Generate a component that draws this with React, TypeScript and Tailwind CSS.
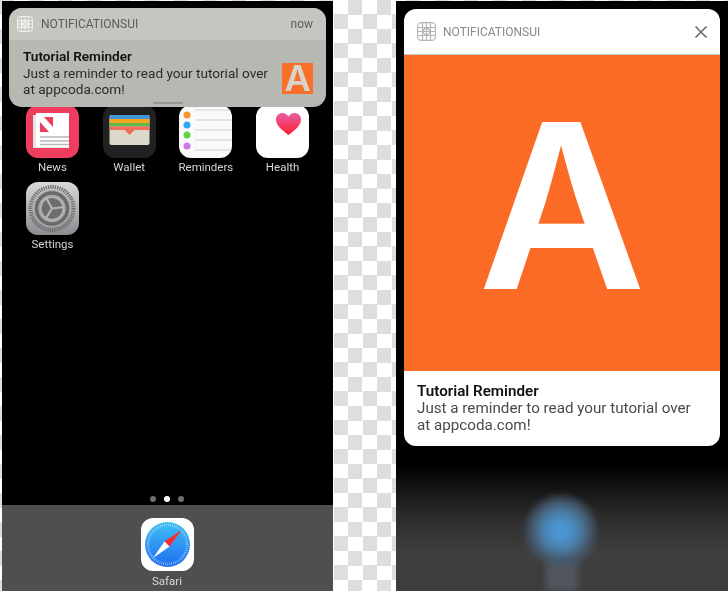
const NewsIcon = () => (
  <svg viewBox="0 0 53 53" className="h-full w-full">
    <rect width="53" height="53" fill="#ee3d5e" />
    <rect x="7" y="10" width="36" height="33" fill="#e4e4e4" />
    <rect x="10" y="8" width="33" height="34" fill="#fff" />
    <rect x="14" y="12" width="13" height="15" fill="#ee3d5e" />
    <path d="M14 12h4l9 10v5h-4l-9-10z" fill="#fff" />
    <path d="M14 32h29M14 36h29M14 39.500h29" stroke="#b8b8bc" strokeWidth="1.500" />
  </svg>
)

const WalletIcon = () => (
  <svg viewBox="0 0 53 53" className="h-full w-full">
    <rect width="53" height="53" fill="#212121" />
    <rect x="6.500" y="10" width="40" height="30" rx="2" fill="#dcd9cb" />
    <path d="M6.500 13a3 3 0 0 1 3-3h34a3 3 0 0 1 3 3v1h-40z" fill="#3f97d8" />
    <rect x="6.500" y="14" width="40" height="4" fill="#f4a81f" />
    <rect x="6.500" y="18" width="40" height="3.500" fill="#63b649" />
    <path d="M6.500 21.500h40v3.500h-15l-5 5-5-5h-15z" fill="#ee6f5c" />
  </svg>
)

const RemindersIcon = () => (
  <svg viewBox="0 0 53 53" className="h-full w-full">
    <rect width="53" height="53" fill="#fafafa" />
    <path d="M16 5h37M16 15h37M16 25h37M16 35h37M16 45h37" stroke="#c4c4c4" strokeWidth="0.800" />
    <circle cx="8" cy="10" r="3.500" fill="#f7932b" />
    <circle cx="8" cy="20" r="3.500" fill="#2fa9f5" />
    <circle cx="8" cy="30" r="3.500" fill="#62d444" />
    <circle cx="8" cy="41" r="3.500" fill="#ce79e6" />
  </svg>
)

const HealthIcon = () => (
  <svg viewBox="0 0 53 53" className="h-full w-full">
    <defs>
      <linearGradient id="heart" x1="0" y1="0" x2="0" y2="1">
        <stop offset="0" stopColor="#e75fa6" />
        <stop offset="1" stopColor="#ff1f2d" />
      </linearGradient>
    </defs>
    <rect width="53" height="53" fill="#fff" />
    <path d="M32.500 30C26 25 20 20.500 20 14.500 20 10.500 23 8 26.500 8c2.500 0 4.700 1.300 6 3.500C33.800 9.300 36 8 38.500 8 42 8 45 10.500 45 14.500c0 6-6 10.500-12.500 15.500z" fill="url(#heart)" />
  </svg>
)

const SettingsIcon = () => (
  <svg viewBox="0 0 53 53" className="h-full w-full">
    <defs>
      <linearGradient id="gear" x1="0" y1="0" x2="0" y2="1">
        <stop offset="0" stopColor="#d8d8d8" />
        <stop offset="1" stopColor="#8b8c90" />
      </linearGradient>
    </defs>
    <rect width="53" height="53" fill="url(#gear)" />
    <circle cx="26" cy="26.500" r="21.500" fill="none" stroke="#6d6d6d" strokeWidth="4" strokeDasharray="1.300 1.000" />
    <circle cx="26" cy="26.500" r="18.500" fill="#a9a9a9" />
    <circle cx="26" cy="26.500" r="15.500" fill="none" stroke="#6a6a6a" strokeWidth="3.500" />
    <circle cx="26" cy="26.500" r="12" fill="#b4b4b4" />
    <circle cx="26" cy="26.500" r="10.500" fill="#6d6d6d" />
    <path d="M26 26.500L38 25M26 26.500L20 15.500M26 26.500L19.500 37" stroke="#b4b4b4" strokeWidth="2.200" />
  </svg>
)

const SafariIcon = () => (
  <svg viewBox="0 0 53 53" className="h-full w-full">
    <defs>
      <linearGradient id="safari" x1="0" y1="0" x2="0" y2="1">
        <stop offset="0" stopColor="#3fc1f6" />
        <stop offset="1" stopColor="#1f6cf0" />
      </linearGradient>
    </defs>
    <rect width="53" height="53" fill="#fff" />
    <circle cx="26.500" cy="26.500" r="22.500" fill="url(#safari)" />
    <circle cx="26.500" cy="26.500" r="19.500" fill="none" stroke="#cfe9fb" strokeWidth="2.500" strokeDasharray="0.500 1.500" />
    <path d="M40.700 12L23.500 23.500 28.500 28.500z" fill="#ff2a2a" />
    <path d="M12 40L23.500 23.500 28.500 28.500z" fill="#fff" />
  </svg>
)

const GridGlyph = ({ stroke }: { stroke: string }) => (
  <svg viewBox="0 0 18 18" className="h-full w-full" fill="none" stroke={stroke} strokeWidth="1.100">
    <rect x="0.600" y="0.600" width="16.800" height="16.800" rx="3.500" />
    <path d="M0.600 5.200h16.800M0.600 9h16.800M0.600 12.800h16.800M5.200 0.600v16.800M9 0.600v16.800M12.800 0.600v16.800" />
    <circle cx="9" cy="9" r="3" />
  </svg>
)

const apps = [
  { name: 'News', Icon: NewsIcon },
  { name: 'Wallet', Icon: WalletIcon },
  { name: 'Reminders', Icon: RemindersIcon },
  { name: 'Health', Icon: HealthIcon },
  { name: 'Settings', Icon: SettingsIcon },
]

function AppTile({ name, Icon }: { name: string; Icon: () => React.JSX.Element }) {
  return (
    <div className="flex w-[53px] flex-col items-center">
      <div className="h-[53px] w-[53px] overflow-hidden rounded-[12px]">
        <Icon />
      </div>
      <span className="mt-[1px] whitespace-nowrap text-[11.500px] leading-[16px] text-[#d4d4d4]">{name}</span>
    </div>
  )
}

export default function App() {
  return (
    <div className="flex h-[591px] w-[728px] overflow-hidden bg-[repeating-conic-gradient(#fff_0_25%,#dedede_0_50%)] bg-[length:29px_29px] pl-[2px] pt-[1px] font-['Roboto',sans-serif]">
      {/* home screen */}
      <div className="relative flex h-[590px] w-[331px] flex-col bg-black blur-[0.4px]">
        <div className="grid grid-cols-[repeat(4,53px)] gap-x-[23.700px] gap-y-[7px] pl-[24px] pt-[104px]">
          {apps.map((a) => (
            <AppTile key={a.name} name={a.name} Icon={a.Icon} />
          ))}
        </div>
        <div className="mt-auto flex justify-center gap-[8px] pr-[1px]">
          <span className="h-[6px] w-[6px] rounded-full bg-[#6e6e6e]" />
          <span className="h-[6px] w-[6px] rounded-full bg-white" />
          <span className="h-[6px] w-[6px] rounded-full bg-[#6e6e6e]" />
        </div>
        <div className="mt-[3px] flex h-[86px] flex-col items-center bg-[#4f4f4f] pr-[1px] pt-[13px]">
          <div className="h-[53px] w-[53px] overflow-hidden rounded-[12px]">
            <SafariIcon />
          </div>
          <span className="mt-[2px] text-[11.500px] leading-[16px] text-[#d8d8d8]">Safari</span>
        </div>

        {/* banner over the icons */}
        <div className="absolute left-[7px] top-[7px] h-[99px] w-[317px] overflow-hidden rounded-[13px] bg-[#b7b8b1]">
          <div className="flex h-[32px] items-center bg-[#c4c6c0] pl-[8px] pr-[13px]">
            <div className="h-[16px] w-[16px]">
              <GridGlyph stroke="#f4f4f4" />
            </div>
            <span className="ml-[8px] text-[12px] text-[#5a5d5a]">NOTIFICATIONSUI</span>
            <span className="ml-auto text-[12px] text-[#5a5d5a]">now</span>
          </div>
          <div className="flex h-[67px] items-start pl-[14px] pr-[13px]">
            <div className="flex-1 whitespace-nowrap pt-[8px] text-[13.600px] leading-[16.500px] text-[#2b2b2b]">
              <p className="font-semibold text-[#111]">Tutorial Reminder</p>
              <p>Just a reminder to read your tutorial over</p>
              <p>at appcoda.com!</p>
            </div>
            <div className="mt-[23px] flex h-[31px] w-[31px] items-center justify-center bg-[#f97028] font-['Inter',sans-serif] text-[36px] font-semibold leading-[31px] text-[#d8d4cc]">
              A
            </div>
          </div>
        </div>
        <div className="absolute left-[151px] top-[101px] h-[2px] w-[30px] rounded-full bg-[#98989a]" />
      </div>

      {/* expanded notification */}
      <div className="ml-[63px] flex h-[590px] w-[332px] flex-col bg-black px-[8px] pt-[8px] blur-[0.4px]">
        <div className="overflow-hidden rounded-[12px] bg-white">
          <div className="flex h-[46px] items-center border-b border-[#c8c8c8] pl-[13px] pr-[12px]">
            <div className="h-[19px] w-[19px]">
              <GridGlyph stroke="#b5b5b5" />
            </div>
            <span className="ml-[7px] text-[12px] text-[#8a8a8a]">NOTIFICATIONSUI</span>
            <svg viewBox="0 0 14 14" className="ml-auto h-[14px] w-[14px]" fill="none" stroke="#6e6e6e" strokeWidth="1.700">
              <path d="M1.500 1.500l11 11M12.500 1.500l-11 11" />
            </svg>
          </div>
          <div className="flex h-[316px] items-center justify-center overflow-hidden bg-[#fb6b25] pb-[16px] font-['Inter',sans-serif] text-[230px] font-semibold leading-none text-white">
            A
          </div>
          <div className="h-[75px] whitespace-nowrap px-[13px] pt-[12px] text-[15.200px] leading-[17px] text-[#4a4a4a]">
            <p className="font-semibold text-[#111]">Tutorial Reminder</p>
            <p>Just a reminder to read your tutorial over</p>
            <p>at appcoda.com!</p>
          </div>
        </div>
        {/* blurred home screen behind */}
        <div className="relative -mx-[8px] mt-[18px] flex-1 overflow-hidden bg-[linear-gradient(#000_0%,#2a2a2a_40%,#3f3f3f_70%,#3c3c3c_100%)]">
          <div className="absolute bottom-0 left-[150px] h-[32px] w-[32px] bg-[#50555f] blur-[3px]" />
          <div className="absolute left-[123px] top-[25px] h-[84px] w-[84px] rounded-full bg-[radial-gradient(circle,#4a97d6_0%,#4a93cf_14%,#4a7ca4_32%,#465a6e_48%,transparent_66%)] blur-[2px]" />
        </div>
      </div>
    </div>
  )
}
